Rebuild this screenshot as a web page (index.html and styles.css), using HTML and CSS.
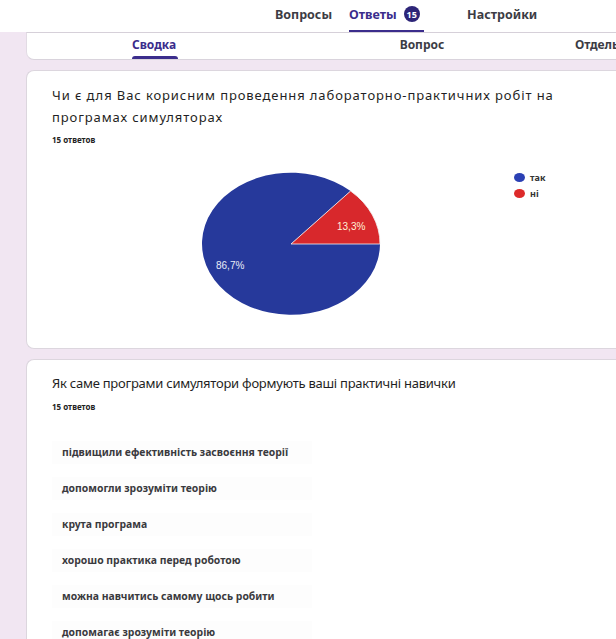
FILE: index.html
```html
<!DOCTYPE html>
<html lang="uk">
<head>
<meta charset="utf-8">
<link rel="stylesheet" href="styles.css">
</head>
<body>
<header class="topbar">
  <nav class="tabs">
    <span class="tab">Вопросы</span>
    <span class="tab active">Ответы <span class="badge">15</span></span>
    <span class="tab">Настройки</span>
  </nav>
</header>
<main class="page">
  <div class="subtabs">
    <span class="subtab active">Сводка</span>
    <span class="subtab">Вопрос</span>
    <span class="subtab">Отдельный ответ</span>
  </div>

  <section class="card chart-card">
    <h2 class="q-title wide">Чи є для Вас корисним проведення лабораторно-практичних робіт на програмах симуляторах</h2>
    <p class="count">15 ответов</p>
    <div class="chart-row">
      <svg class="pie" width="184" height="148" viewBox="0 0 184 148">
        <path d="M92 73 L151.6 20 A89 71 0 1 0 181 73 Z" fill="#26399b"/>
        <path d="M92 73 L181 73 A89 71 0 0 0 151.6 20 Z" fill="#d8282c" stroke="#f2f2f2" stroke-width="0.8"/>
        <text x="138" y="59" class="pie-label warm">13,3%</text>
        <text x="17" y="98" class="pie-label">86,7%</text>
      </svg>
      <ul class="legend">
        <li><span class="dot blue"></span>так</li>
        <li><span class="dot red"></span>ні</li>
      </ul>
    </div>
  </section>

  <section class="card text-card">
    <h2 class="q-title">Як саме програми симулятори формують ваші практичні навички</h2>
    <p class="count">15 ответов</p>
    <ul class="answers">
      <li>підвищили ефективність засвоєння теорії</li>
      <li>допомогли зрозуміти теорію</li>
      <li>крута програма</li>
      <li>хорошо практика перед роботою</li>
      <li>можна навчитись самому щось робити</li>
      <li>допомагає зрозуміти теорію</li>
    </ul>
  </section>
</main>
</body>
</html>
```

FILE: styles.css
```css
* { box-sizing: border-box; }

html, body {
  margin: 0;
  padding: 0;
  height: 100%;
  overflow: hidden;
}

body {
  background: #f1e6f2;
  font-family: "Noto Sans", "Open Sans", sans-serif;
  color: #202124;
}

/* top navigation */
.topbar {
  background: #ffffff;
  height: 32px;
  display: flex;
}

.tabs {
  display: flex;
  gap: 17px;
  padding-left: 275px;
  height: 32px;
}

.tab {
  display: flex;
  align-items: center;
  gap: 7px;
  font-size: 12.5px;
  font-weight: 700;
  letter-spacing: 0;
  color: #3c3c44;
  padding-bottom: 2px;
  border-bottom: 2px solid transparent;
  height: 32px;
  white-space: nowrap;
}

.tab.active {
  color: #3b2d8c;
  border-bottom-color: #3b2d8c;
  width: 75px;
  margin-right: 26px;
}

.badge {
  display: inline-flex;
  align-items: center;
  justify-content: center;
  width: 16px;
  height: 16px;
  border-radius: 50%;
  background: #2d2578;
  color: #fff;
  font-size: 9px;
  font-weight: 700;
  letter-spacing: 0;
}

/* page body */
.page {
  padding-left: 26px;
  display: flex;
  flex-direction: column;
  gap: 10px;
}

.subtabs {
  background: #fff;
  height: 28px;
  display: flex;
  align-items: stretch;
  border-radius: 0 0 0 8px;
  border-top: 1px solid #d6d0d9;
  border-left: 1px solid #e2dbe4;
  border-bottom: 1px solid #d9d3dc;
  width: 620px;
  overflow: hidden;
}

.subtab {
  position: relative;
  display: flex;
  justify-content: center;
  align-items: flex-start;
  padding-top: 3px;
  font-size: 12px;
  font-weight: 700;
  color: #3c3c44;
  flex: 0 0 auto;
}

.subtab:nth-child(1) { width: 254px; }
.subtab:nth-child(2) { width: 282px; }
.subtab:nth-child(3) { justify-content: flex-start; padding-left: 12px; white-space: nowrap; }

.subtab.active { color: #3b2d8c; }

.subtab.active::after {
  content: "";
  position: absolute;
  left: 105px;
  width: 46px;
  bottom: 0;
  height: 3px;
  border-radius: 3px 3px 0 0;
  background: #3b2d8c;
}

/* question cards */
.card {
  background: #fff;
  border-radius: 8px 0 0 8px;
  border: 1px solid #dcd6de;
  border-right: none;
  padding: 13px 0 0 25px;
  width: 620px;
}

.chart-card { height: 279px; }

.text-card { min-height: 300px; padding-top: 12px; }

.q-title {
  margin: 0;
  font-size: 13px;
  font-weight: 400;
  line-height: 22px;
  letter-spacing: -0.25px;
  color: #1f1f24;
  max-width: 540px;
}

.q-title.wide {
  letter-spacing: 0.9px;
  max-width: 545px;
}

.count {
  margin: 6px 0 0;
  font-size: 8px;
  font-weight: 700;
  color: #222;
  line-height: 12px;
}

.text-card .count { margin-top: 7px; }

/* pie chart */
.chart-row {
  display: flex;
  align-items: flex-start;
  margin-top: 25px;
}

.pie {
  margin-left: 147px;
  flex: 0 0 auto;
}

.pie-label {
  font-family: "Liberation Sans", Arial, sans-serif;
  font-size: 10px;
  fill: #e8ecf8;
}

.pie-label.warm { fill: #fff1d8; }

.legend {
  list-style: none;
  margin: -2px 0 0 131px;
  padding: 0;
}

.legend li {
  display: flex;
  align-items: center;
  gap: 5px;
  font-size: 9px;
  font-weight: 700;
  color: #333;
  height: 16px;
}

.dot {
  width: 11px;
  height: 9px;
  border-radius: 50%;
}

.dot.blue { background: #2b40b4; }
.dot.red { background: #dd2a2a; }

/* text answers */
.answers {
  list-style: none;
  margin: 28px 0 0;
  padding: 0;
  display: flex;
  flex-direction: column;
  gap: 13px;
}

.answers li {
  display: block;
  width: fit-content;
  min-width: 260px;
  padding: 6px 10px;
  background: #fdfdfd;
  font-size: 10.4px;
  font-weight: 700;
  color: #3a3a3e;
  line-height: 11px;
  white-space: nowrap;
}
```
